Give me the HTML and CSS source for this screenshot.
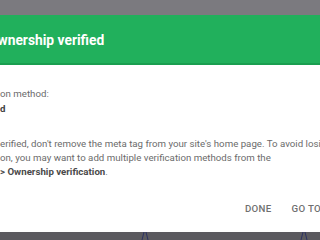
FILE: index.html
```html
<!DOCTYPE html>
<html>
<head>
<meta charset="utf-8">
<link rel="stylesheet" href="styles.css">
</head>
<body>
<div class="top-shade"></div>
<div class="dialog">
  <div class="header">
    <h2 class="title">Ownership verified</h2>
  </div>
  <div class="content">
    <div class="label">on method:</div>
    <div class="method">d</div>
    <div class="para">
      <div class="line">erified, don't remove the meta tag from your site's home page. To avoid losing</div>
      <div class="line">on, you may want to add multiple verification methods from the</div>
      <div class="line"><b>&gt; Ownership verification</b>.</div>
    </div>
  </div>
  <div class="actions">
    <span class="btn">DONE</span>
    <span class="btn">GO TO PROPERTY</span>
  </div>
</div>
<div class="bottom-shade">
  <svg class="marks" width="320" height="8" viewBox="0 0 320 8">
    <path d="M142 8 L144 0 M146 0 L148 8" stroke="#2c3163" stroke-width="1" fill="none"/>
    <path d="M301 8 L303 0 M305 0 L307 8" stroke="#2c3163" stroke-width="1" fill="none"/>
  </svg>
</div>
</body>
</html>
```

FILE: styles.css
```css
html, body {
  margin: 0;
  padding: 0;
}
body {
  width: 320px;
  height: 240px;
  overflow: hidden;
  background: #5b5a5f;
  font-family: Roboto, "Liberation Sans", sans-serif;
  display: flex;
  flex-direction: column;
}
.top-shade {
  height: 15px;
  background: #7b7a7f;
  flex: none;
}
.dialog {
  background: #ffffff;
  width: 420px;
  height: 217px;
  flex: none;
  display: flex;
  flex-direction: column;
}
.header {
  height: 48px;
  background: #21b05c;
  border-bottom: 2px solid #1a9e50;
  display: flex;
  align-items: center;
  flex: none;
}
.title {
  margin: 2px 0 0 -12px;
  color: #ffffff;
  font-size: 13.8px;
  font-weight: 700;
  letter-spacing: 0;
}
.content {
  padding-top: 22px;
  color: #6b6b6b;
  font-size: 9.7px;
  line-height: 14px;
}
.label {
  white-space: nowrap;
}
.method {
  color: #3f3f3f;
  font-weight: 700;
  margin-top: 1px;
}
.para {
  margin-top: 21px;
  white-space: nowrap;
}
.para b {
  color: #4a4a4a;
  font-weight: 700;
}
.actions {
  display: flex;
  gap: 20px;
  padding-left: 245px;
  margin-top: 24px;
}
.btn {
  color: #6f6f6f;
  font-size: 9.7px;
  font-weight: 500;
  letter-spacing: 0.3px;
  white-space: nowrap;
}
.bottom-shade {
  flex: 1;
  background: #5b5a5f;
}
.marks {
  display: block;
}
```
